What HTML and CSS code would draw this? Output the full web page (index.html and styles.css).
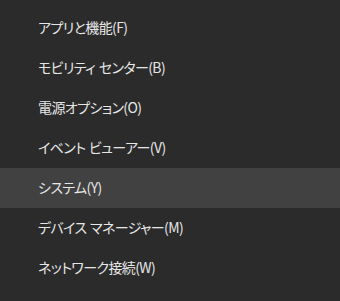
FILE: index.html
```html
<!DOCTYPE html>
<html lang="ja">
<head>
<meta charset="utf-8">
<link rel="stylesheet" href="styles.css">
</head>
<body>
<ul class="menu">
  <li class="item">アプリと機能(F)</li>
  <li class="item">モビリティ センター(B)</li>
  <li class="item">電源オプション(O)</li>
  <li class="item">イベント ビューアー(V)</li>
  <li class="item active">システム(Y)</li>
  <li class="item">デバイス マネージャー(M)</li>
  <li class="item">ネットワーク接続(W)</li>
</ul>
</body>
</html>
```
FILE: styles.css
```css
html, body {
  margin: 0;
  padding: 0;
  background: #2b2b2b;
  width: 340px;
  height: 301px;
  overflow: hidden;
}
.menu {
  list-style: none;
  margin: 0;
  padding: 8px 0 0 0;
  font-family: "Noto Sans CJK JP", "Noto Sans", sans-serif;
  font-size: 14px;
  letter-spacing: -0.6px;
  word-spacing: 1px;
  font-feature-settings: "palt";
  color: #e6e6e6;
}
.item {
  height: 40px;
  box-sizing: border-box;
  display: flex;
  align-items: center;
  padding-left: 38px;
  padding-bottom: 2px;
}
.active {
  background: #414141;
}
```
